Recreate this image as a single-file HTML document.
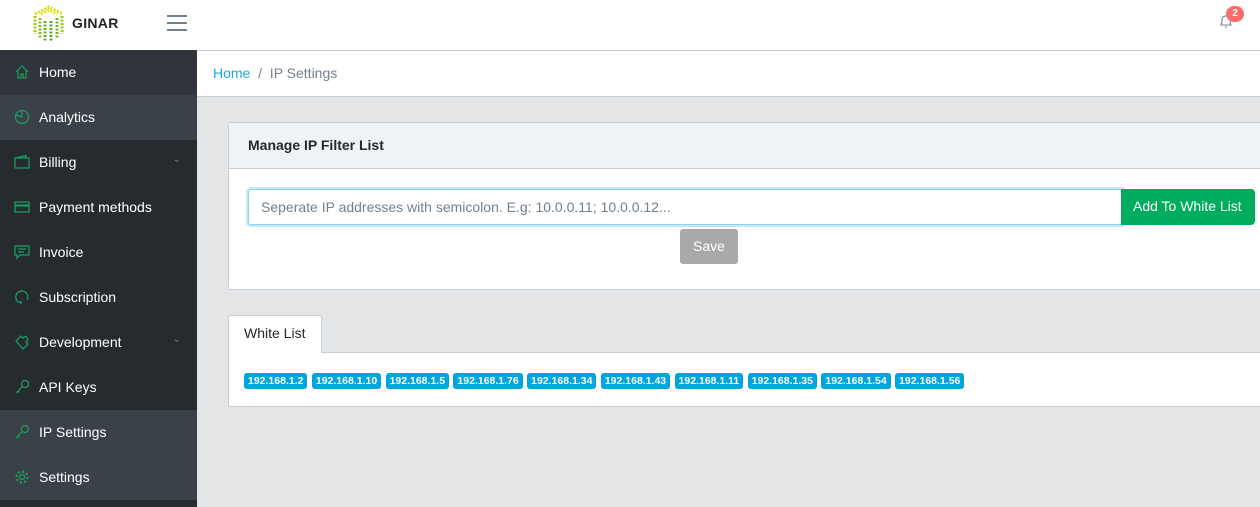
<!DOCTYPE html>
<html><head><style>
*{box-sizing:border-box;margin:0;padding:0}
body{width:1260px;height:507px;overflow:hidden;font-family:"Liberation Sans",sans-serif;background:#e4e5e6;position:relative;font-size:14px}
.hdr{position:absolute;left:0;top:0;width:1260px;height:51px;background:#fff;border-bottom:1px solid #c8ced3}
.side{position:absolute;left:0;top:50px;width:197px;height:457px;background:#262b30}
.it{height:45px;display:flex;align-items:center;color:#fff;font-size:14px;padding-left:39px;position:relative;padding-bottom:1px}
.it svg{position:absolute;left:14px;top:14px}
.it.a{background:#3a4148}
.it.h{background:#2f353a}
.chev{position:absolute;right:16px;top:14px;color:#73818f;font-size:10px}
.bc{position:absolute;left:197px;top:51px;width:1063px;height:46px;background:#fff;border-bottom:1px solid #c8ced3;padding:14px 16px;color:#73818f}
.bc a{color:#20a8d8}
.card{position:absolute;left:228px;top:122px;width:1040px;height:168px;background:#fff;border:1px solid #c8ced3;border-radius:3px}
.ch{height:46px;background:#f0f3f5;border-bottom:1px solid #c8ced3;padding:14px 19px;font-weight:bold;color:#23282c}
.inp{position:absolute;left:19px;top:66px;width:874px;height:36px;border:1px solid #8ad4ee;box-shadow:0 0 0 2px #c5e8f6;border-radius:3px 0 0 3px;padding:9px 12px;color:#73818f;font-size:14px}
.add{position:absolute;left:892px;top:66px;width:134px;height:36px;background:#00ad5f;border-radius:0 4px 4px 0;color:#fff;padding:9px 12px;font-size:14px}
.save{position:absolute;left:451px;top:106px;width:58px;height:35px;background:#a9a9a9;border-radius:3px;color:#fff;text-align:center;line-height:34px}
.tab{position:absolute;left:228px;top:315px;width:94px;height:38px;background:#fff;border:1px solid #c8ced3;border-bottom:none;border-radius:3px 3px 0 0;padding:9px 15px;color:#23282c;z-index:2}
.tc{position:absolute;left:228px;top:352px;width:1040px;height:55px;background:#fff;border:1px solid #c8ced3;padding:20px 15px;display:flex;gap:4.4px}
.b{background:#00a5dc;color:#fff;font-weight:bold;font-size:10.5px;padding:2px 4px;border-radius:3px;height:16px;line-height:12px}
</style></head><body>
<div class="hdr">
<svg style="position:absolute;left:31px;top:4px" width="36" height="40" viewBox="0 0 36 40"><g fill="none" stroke-width="3" stroke-dasharray="2 1.5"><path d="M4 10 L18 3 L32 10" stroke="#d4e01a"/><path d="M4 12 V30" stroke="#a6c822"/><path d="M9 14 V34" stroke="#8cbe24"/><path d="M14 17 V37" stroke="#6db22a"/><path d="M20 17 V37" stroke="#5da82c"/><path d="M26 14 V34" stroke="#76b82a"/><path d="M31 12 V30" stroke="#9cc622"/><path d="M10 10 L18 6 L26 10" stroke="#e8e41a"/></g></svg>
<div style="position:absolute;left:72px;top:15px;font-size:14px;font-weight:bold;color:#222;letter-spacing:.3px">GINAR</div>
<div style="position:absolute;left:167px;top:15px;width:20px"><div style="height:2px;background:#73818f;margin-bottom:5px"></div><div style="height:2px;background:#73818f;margin-bottom:5px"></div><div style="height:2px;background:#73818f"></div></div>
<svg style="position:absolute;left:1219px;top:14px" width="14" height="15" viewBox="0 0 14 15"><path d="M2 11 Q3 9 3 6 Q3 2 7 2 Q11 2 11 6 Q11 9 12 11 Z M6 13 H8" fill="none" stroke="#73818f" stroke-width="1.1"/></svg>
<div style="position:absolute;left:1226px;top:6px;width:18px;height:16px;border-radius:8px;background:#f86c6b;color:#fff;font-size:10px;font-weight:bold;text-align:center;line-height:16px">2</div>
</div>
<div class="side">
<div class="it h"><svg width="16" height="16"><path d="M2 8 L8 2 L14 8 M4 7 V14 H7 V10 H9 V14 H12 V7" fill="none" stroke="#1ba160" stroke-width="1.2"/></svg>Home</div>
<div class="it a"><svg width="16" height="16"><circle cx="8" cy="8" r="6.5" fill="none" stroke="#1ba160" stroke-width="1.2"/><path d="M8 8 V1.5 M8 8 L2 6" stroke="#1ba160" stroke-width="1.2"/></svg>Analytics</div>
<div class="it"><svg width="16" height="16"><path d="M1 4 H15 V14 H1 Z M2 4 L12 1.5 V4" fill="none" stroke="#1ba160" stroke-width="1.2"/></svg>Billing<span class="chev">&#8964;</span></div>
<div class="it"><svg width="16" height="16"><rect x="1" y="3" width="14" height="10" fill="none" stroke="#1ba160" stroke-width="1.2"/><path d="M1 6.5 H15" stroke="#1ba160" stroke-width="2"/></svg>Payment methods</div>
<div class="it"><svg width="16" height="16"><path d="M1 2 H15 V11 H6 L3 14 V11 H1 Z M4 5 H12 M4 8 H10" fill="none" stroke="#1ba160" stroke-width="1.2"/></svg>Invoice</div>
<div class="it"><svg width="16" height="16"><path d="M8 14 A6 6 0 1 1 13 11 M8 14 L6 12" fill="none" stroke="#1ba160" stroke-width="1.2"/></svg>Subscription</div>
<div class="it"><svg width="16" height="16"><path d="M2 7 L7 2 L9 4 Q12 1 13 4 Q15 6 12 8 L14 10 L9 15 Z" fill="none" stroke="#1ba160" stroke-width="1.2"/></svg>Development<span class="chev">&#8964;</span></div>
<div class="it"><svg width="16" height="16"><circle cx="11" cy="5" r="3.5" fill="none" stroke="#1ba160" stroke-width="1.2"/><path d="M8.5 7.5 L2 14 M4 12 L5.5 13.5" stroke="#1ba160" stroke-width="1.2"/></svg>API Keys</div>
<div class="it a"><svg width="16" height="16"><circle cx="11" cy="5" r="3.5" fill="none" stroke="#1ba160" stroke-width="1.2"/><path d="M8.5 7.5 L2 14 M4 12 L5.5 13.5" stroke="#1ba160" stroke-width="1.2"/></svg>IP Settings</div>
<div class="it a"><svg width="16" height="16"><circle cx="8" cy="8" r="2.5" fill="none" stroke="#1ba160" stroke-width="1.2"/><circle cx="8" cy="8" r="5.5" fill="none" stroke="#1ba160" stroke-width="2" stroke-dasharray="2.2 2.1"/></svg>Settings</div>
</div>
<div class="bc"><a>Home</a> &nbsp;/&nbsp; IP Settings</div>
<div class="card"><div class="ch">Manage IP Filter List</div>
<div class="inp">Seperate IP addresses with semicolon. E.g: 10.0.0.11; 10.0.0.12...</div>
<div class="add">Add To White List</div>
<div class="save">Save</div></div>
<div class="tab">White List</div>
<div class="tc"><span class="b">192.168.1.2</span><span class="b">192.168.1.10</span><span class="b">192.168.1.5</span><span class="b">192.168.1.76</span><span class="b">192.168.1.34</span><span class="b">192.168.1.43</span><span class="b">192.168.1.11</span><span class="b">192.168.1.35</span><span class="b">192.168.1.54</span><span class="b">192.168.1.56</span></div>
</body></html>
